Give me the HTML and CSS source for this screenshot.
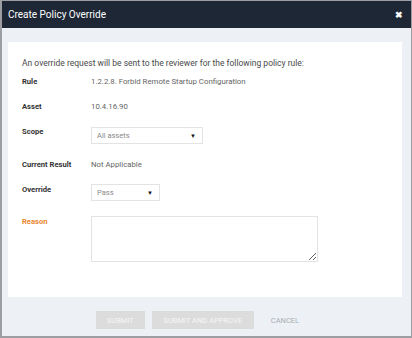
FILE: index.html
```html
<!DOCTYPE html>
<html lang="en">
<head>
  <meta charset="UTF-8">
  <meta name="viewport" content="width=device-width, initial-scale=1.0">
  <title>Create Policy Override</title>
  <link rel="stylesheet" href="styles.css">
</head>
<body>
  <div class="modal">
    <div class="modal-header">
      <h1>Create Policy Override</h1>
      <span class="close-button">&#10006;</span>
    </div>
    <div class="modal-body">
      <div class="panel">
        <p class="intro">An override request will be sent to the reviewer for the following policy rule:</p>
        <div class="row row-rule">
          <span class="label">Rule</span>
          <span class="value">1.2.2.8. Forbid Remote Startup Configuration</span>
        </div>
        <div class="row row-asset">
          <span class="label">Asset</span>
          <span class="value">10.4.16.90</span>
        </div>
        <div class="row row-scope">
          <span class="label">Scope</span>
          <div class="select select-scope"><span>All assets</span><span class="arrow">&#9660;</span></div>
        </div>
        <div class="row row-result">
          <span class="label">Current Result</span>
          <span class="value">Not Applicable</span>
        </div>
        <div class="row row-override">
          <span class="label">Override</span>
          <div class="select select-override"><span>Pass</span><span class="arrow">&#9660;</span></div>
        </div>
        <div class="row row-reason">
          <span class="label required">Reason</span>
          <textarea class="reason"></textarea>
        </div>
      </div>
    </div>
    <div class="modal-footer">
      <button class="btn" disabled>SUBMIT</button>
      <button class="btn" disabled>SUBMIT AND APPROVE</button>
      <button class="btn-link">CANCEL</button>
    </div>
  </div>
</body>
</html>
```

FILE: styles.css
```css
body {
  margin: 0;
  font-family: Roboto, 'Liberation Sans', sans-serif;
  background-color: #ffffff;
}
.modal {
  width: 412px;
  height: 338px;
  box-sizing: border-box;
  border: 1px solid #9c9ea2;
  border-left-width: 2px;
  border-bottom-width: 2px;
  background-color: #edf0f4;
  display: flex;
  flex-direction: column;
}
.modal-header {
  height: 27px;
  background-color: #1d2735;
  display: flex;
  align-items: center;
  justify-content: space-between;
  padding: 0 8px 0 6px;
}
h1 {
  margin: 0;
  font-size: 10px;
  font-weight: 400;
  color: #ffffff;
}
.close-button {
  color: #ffffff;
  font-size: 9px;
  font-weight: bold;
}
.modal-body {
  padding: 14px 9px 0 6px;
}
.panel {
  background-color: #ffffff;
  height: 255px;
  box-sizing: border-box;
  padding: 15px 14px 0;
}
.intro {
  margin: 0;
  font-size: 8.5px;
  line-height: 12px;
  color: #4a4a4a;
}
.row {
  display: flex;
  align-items: flex-start;
}
.label {
  width: 69px;
  flex-shrink: 0;
  font-size: 7.6px;
  line-height: 12px;
  font-weight: bold;
  color: #333333;
}
.required {
  color: #e8872f;
}
.value {
  font-size: 7.8px;
  line-height: 12px;
  color: #666666;
}
.row-rule { margin-top: 7px; }
.row-asset { margin-top: 13px; }
.row-scope { margin-top: 14px; }
.row-scope .label { margin-top: -1px; }
.row-result { margin-top: 15px; }
.row-override { margin-top: 13px; }
.row-reason { margin-top: 15px; }
.select {
  height: 17px;
  box-sizing: border-box;
  border: 1px solid #e3e3e3;
  display: flex;
  align-items: center;
  justify-content: space-between;
  padding: 0 6px 0 5px;
  font-size: 7.5px;
  color: #888888;
}
.select-scope { width: 112px; }
.select-override { width: 69px; }
.arrow {
  color: #111111;
  font-size: 6px;
}
.reason {
  width: 227px;
  height: 46px;
  box-sizing: border-box;
  border: 1px solid #e3e3e3;
  margin: 0;
  padding: 2px;
}
.modal-footer {
  display: flex;
  justify-content: center;
  gap: 7px;
  padding-top: 14px;
}
.btn {
  height: 18px;
  border: none;
  background-color: #dcdcdc;
  color: #f6f6f6;
  font-family: Roboto, 'Liberation Sans', sans-serif;
  font-size: 7.5px;
  padding: 0 11px;
}
.btn:first-child { width: 49px; }
.btn:nth-child(2) { width: 102px; }
.btn-link {
  height: 18px;
  border: none;
  background: none;
  color: #a9adb3;
  font-family: Roboto, 'Liberation Sans', sans-serif;
  font-size: 7.5px;
  padding: 0 18px 0 10px;
}
```
